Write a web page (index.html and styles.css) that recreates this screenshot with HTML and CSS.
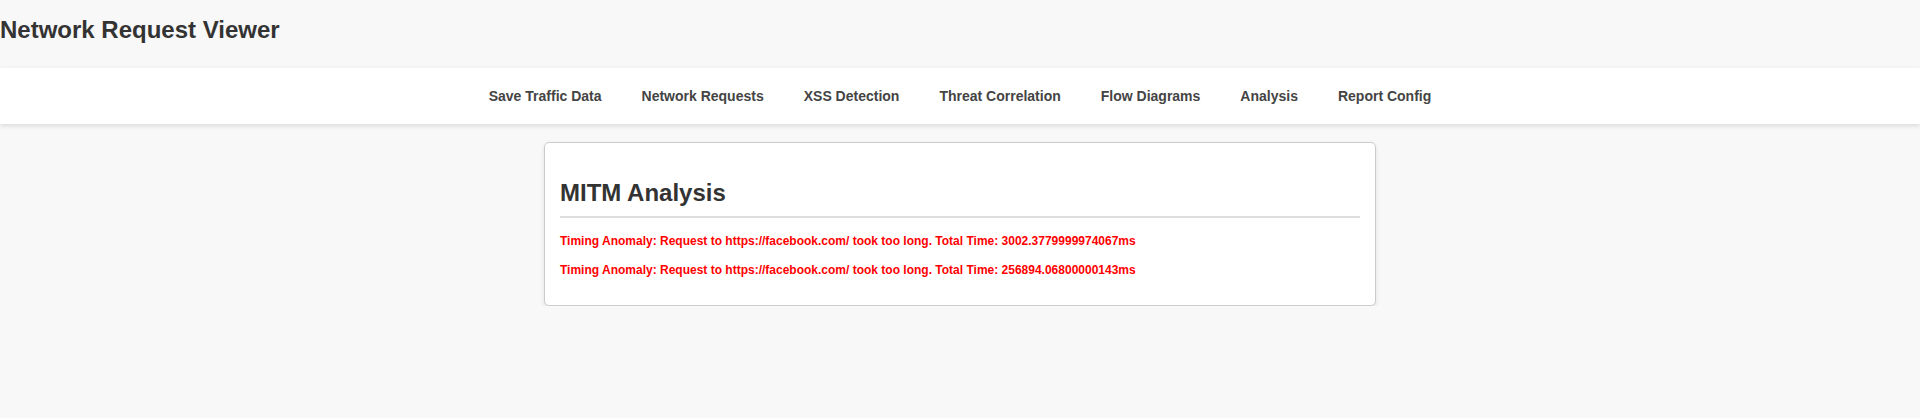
FILE: index.html
```html
<!DOCTYPE html>
<html lang="en">
<head>
<meta charset="utf-8">
<title>Network Request Viewer</title>
<link rel="stylesheet" href="styles.css">
</head>
<body>
<header class="site-header">
  <h1 class="site-title">Network Request Viewer</h1>
</header>
<nav class="main-nav">
  <a class="nav-link" href="#">Save Traffic Data</a>
  <a class="nav-link" href="#">Network Requests</a>
  <a class="nav-link" href="#">XSS Detection</a>
  <a class="nav-link" href="#">Threat Correlation</a>
  <a class="nav-link" href="#">Flow Diagrams</a>
  <a class="nav-link" href="#">Analysis</a>
  <a class="nav-link" href="#">Report Config</a>
</nav>
<main class="content">
  <section class="card">
    <h2 class="card-title">MITM Analysis</h2>
    <p class="alert">Timing Anomaly: Request to https://facebook.com/ took too long. Total Time: 3002.3779999974067ms</p>
    <p class="alert">Timing Anomaly: Request to https://facebook.com/ took too long. Total Time: 256894.06800000143ms</p>
  </section>
</main>
</body>
</html>
```

FILE: styles.css
```css
html, body {
  margin: 0;
  padding: 0;
}

body {
  background: #f8f8f8;
  font-family: "Liberation Sans", Arial, sans-serif;
  color: #333;
}

.site-header {
  padding: 0;
}

.site-title {
  margin: 16px 0 24px;
  font-size: 24px;
  font-weight: bold;
  color: #333;
}

.main-nav {
  display: flex;
  justify-content: center;
  background: #fff;
  box-shadow: 0 2px 5px rgba(0, 0, 0, 0.12);
}

.nav-link {
  display: block;
  padding: 20px 20px;
  font-size: 14px;
  font-weight: bold;
  color: #444;
  text-decoration: none;
}

.content {
  padding-top: 18px;
}

.card {
  width: 800px;
  margin: 0 auto;
  padding: 15px 15px 13px;
  background: #fff;
  border: 1px solid #ccc;
  border-radius: 5px;
  box-shadow: 0 2px 4px rgba(0, 0, 0, 0.1);
}

.card-title {
  margin: 21px 0 16px;
  padding-bottom: 9px;
  border-bottom: 2px solid #ddd;
  font-size: 24px;
  font-weight: bold;
  color: #333;
}

.alert {
  margin: 15px 0;
  font-size: 12px;
  font-weight: bold;
  color: #f00;
}
```
